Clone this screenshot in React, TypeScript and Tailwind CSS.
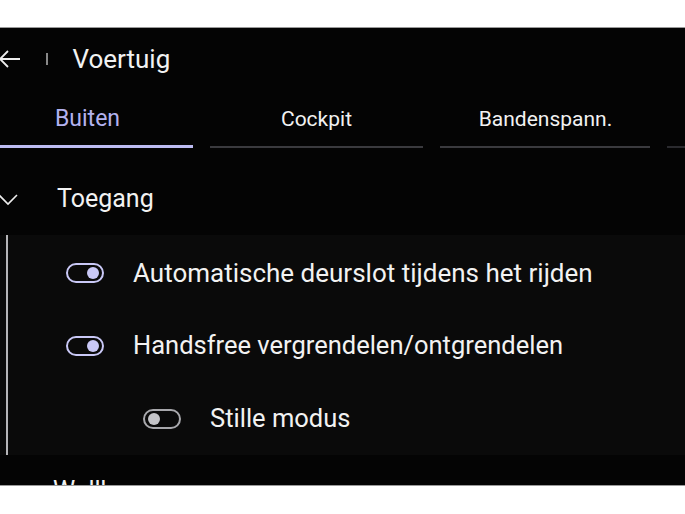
import React from "react";

const font = { fontFamily: "Roboto, 'Noto Sans', sans-serif" };

function Toggle({ on }: { on: boolean }) {
  return (
    <div
      className={`w-[38px] h-[20px] rounded-full border-2 flex items-center justify-end pr-[3px] ${
        on ? "border-[#c9c8f6]" : "border-[#a8a8ac] justify-start pl-[3px]"
      }`}
    >
      <div className={`w-[12px] h-[12px] rounded-full ${on ? "bg-[#c9c8f6]" : "bg-[#c4c4c8]"}`} />
    </div>
  );
}

export default function App() {
  return (
    <div className="w-[685px] h-[514px] bg-white flex flex-col overflow-hidden" style={font}>
      <div className="h-[28px] shrink-0 bg-white border-b border-[#9a9a9a]" />
      <div className="h-[457px] shrink-0 bg-[#040404] flex flex-col text-[#f2f2f2] overflow-hidden">
        {/* header */}
        <div className="h-[62px] shrink-0 flex items-center">
          <svg width="24" height="20" viewBox="0 0 24 20" className="ml-[-2px]">
            <path d="M22 10H2M10 2L2 10l8 8" fill="none" stroke="#eee" strokeWidth="1.8" />
          </svg>
          <div className="ml-[24px] w-[1.5px] h-[12px] bg-[#888]" />
          <div className="ml-[25px] text-[26px] leading-none pb-[1px]">Voertuig</div>
        </div>
        {/* tabs */}
        <div className="h-[58px] shrink-0 flex gap-[17px]">
          <div className="w-[193px] shrink-0 flex flex-col">
            <div className="flex-1 flex items-center pt-[3px] pl-[55px] text-[23px] text-[#b3b2ef]">Buiten</div>
            <div className="h-[3px] bg-[#bdbcf2]" />
          </div>
          <div className="w-[213px] shrink-0 flex flex-col">
            <div className="flex-1 flex items-center justify-center pt-[3px] text-[21px]">Cockpit</div>
            <div className="h-[2px] bg-[#3a3a3e]" />
          </div>
          <div className="w-[210px] shrink-0 flex flex-col">
            <div className="flex-1 flex items-center justify-center pt-[3px] text-[21px] pl-[1px]">Bandenspann.</div>
            <div className="h-[2px] bg-[#3a3a3e]" />
          </div>
          <div className="w-[40px] shrink-0 flex flex-col">
            <div className="flex-1" />
            <div className="h-[2px] bg-[#2a2a2e]" />
          </div>
        </div>
        {/* section header */}
        <div className="h-[87px] shrink-0 flex items-center pt-[14px]">
          <svg width="20" height="12" viewBox="0 0 20 12" className="ml-[-2px] mt-[2px]">
            <path d="M1 1l9 9 9-9" fill="none" stroke="#eee" strokeWidth="1.6" />
          </svg>
          <div className="ml-[39px] text-[25px]">Toegang</div>
        </div>
        {/* panel */}
        <div className="h-[220px] shrink-0 bg-[#0a0a0a] flex">
          <div className="ml-[6px] w-[2px] bg-[#b5b5b8]" />
          <div className="flex-1 flex flex-col pt-[2px]">
            <div className="h-[72px] flex items-center">
              <div className="ml-[58px]"><Toggle on /></div>
              <div className="ml-[29px] text-[26px]">Automatische deurslot tijdens het rijden</div>
            </div>
            <div className="h-[73px] flex items-center">
              <div className="ml-[58px]"><Toggle on /></div>
              <div className="ml-[29px] text-[25.5px]">Handsfree vergrendelen/ontgrendelen</div>
            </div>
            <div className="h-[73px] flex items-center">
              <div className="ml-[135px]"><Toggle on={false} /></div>
              <div className="ml-[29px] text-[25.5px]">Stille modus</div>
            </div>
          </div>
        </div>
        <div className="flex-1 relative">
          <div className="absolute left-[53px] top-[17px] text-[25px]">Wallbox</div>
        </div>
      </div>
      <div className="flex-1 bg-white border-t border-[#9a9a9a]" />
    </div>
  );
}
